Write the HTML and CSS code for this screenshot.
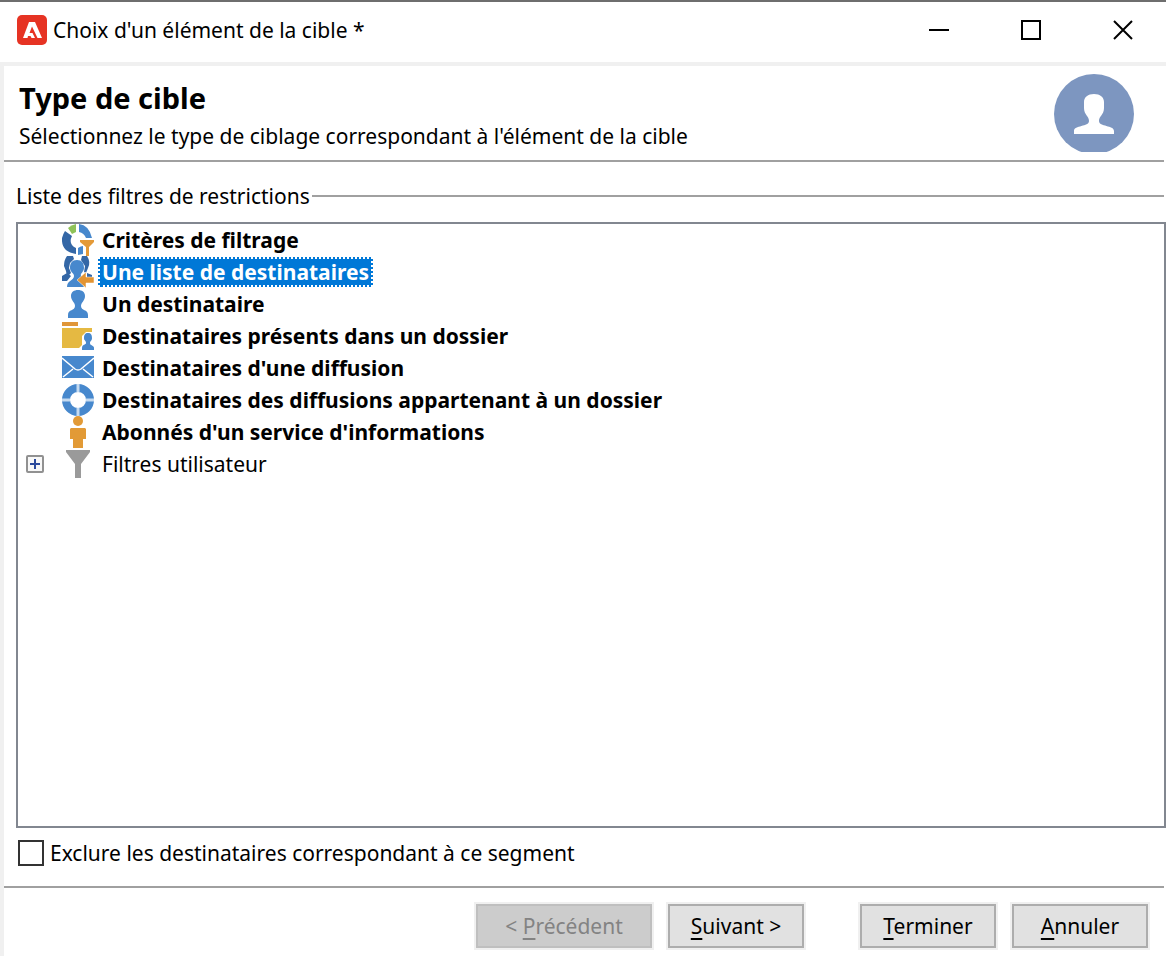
FILE: index.html
```html
<!DOCTYPE html>
<html lang="fr">

<head>
    <meta charset="UTF-8">
    <meta name="viewport" content="width=device-width, initial-scale=1.0">
    <title>Choix d'un élément de la cible</title>
    <link rel="stylesheet" href="styles.css">
</head>

<body>
    <div class="window">
        <div class="titlebar">
            <svg class="logo" viewBox="0 0 30 30">
                <rect width="30" height="30" rx="5" fill="#e63323" />
                <path d="M12 7h6l7 16h-4.500l-5.500-11.500L12.500 18h3l2.500 5h-3.500l-1-2H11l-.5 2H6z" fill="#fff" />
            </svg>
            <span class="caption">Choix d'un élément de la cible *</span>
            <div class="controls">
                <button type="button" aria-label="Réduire">
                    <svg viewBox="0 0 20 20"><path d="M0 10h20" /></svg>
                </button>
                <button type="button" aria-label="Agrandir">
                    <svg viewBox="0 0 20 20"><path d="M1 1h18v18H1z" /></svg>
                </button>
                <button type="button" aria-label="Fermer">
                    <svg viewBox="0 0 20 20"><path d="M1 1l18 18M19 1L1 19" /></svg>
                </button>
            </div>
        </div>

        <div class="page">
            <header class="header">
                <div class="heading">
                    <h1>Type de cible</h1>
                    <p>Sélectionnez le type de ciblage correspondant à l'élément de la cible</p>
                </div>
                <svg class="avatar" viewBox="0 0 80 78">
                    <circle cx="40" cy="40" r="40" fill="#7d96c0" />
                    <path d="M40 20c6 0 10 3 10 8v6c0 7-5 8-5 13 0 6 15 4 15 10v3H20v-3c0-6 15-4 15-10 0-5-5-6-5-13v-6c0-5 4-8 10-8z" fill="#fff" />
                </svg>
            </header>

            <main class="content">
                <h2 class="group">Liste des filtres de restrictions</h2>
                <ul class="tree">
                    <li class="node">
                        <svg class="icon" viewBox="0 0 32 32">
                            <path d="M3 7l7 5q-4 8 4 12v6Q-1 28 0 14q1-4 3-7z" fill="#3467a6" />
                            <path d="M6 4q3-3 8-4v8l-4 2z" fill="#8fc258" />
                            <path d="M17 0q10 1 13 14h-6q-2-5-7-6zM16 24q3-2 5-2v8l-5 1z" fill="#4788cd" />
                            <path d="M18 16h14v2l-5 5v9h-3v-9l-6-5z" fill="#e49a38" />
                        </svg>
                        <span class="name">Critères de filtrage</span>
                    </li>
                    <li class="node">
                        <svg class="icon" viewBox="0 0 32 32">
                            <path d="M5 0h6l1 3-4 4-1 5 2 5-4 4-1-6-2-5q0-6 3-10zM20 0h5q4 6 1 12l-2 5-2-1 1-6-4-6zM0 20l5-3 4 3-4 5H0zM25 17l5 2v3h-5z" fill="#3467a6" />
                            <path d="M15 4c5 0 7 3 7 8 0 4-4 5-3 8l5 2-4 5 2 4H5c0-7 7-6 7-11 0-3-4-4-4-8 0-5 2-8 7-8z" fill="#4788cd" />
                            <path d="M15 24l9-8v5h8v6h-8v5z" fill="#e29433" stroke="#fff" stroke-width=".5" />
                        </svg>
                        <span class="name selected">Une liste de destinataires</span>
                    </li>
                    <li class="node">
                        <svg class="icon" viewBox="0 0 32 32">
                            <path d="M16 2c4 0 7 2 7 6 0 5-4 6-4 10 0 5 7 3 7 9v3H6v-3c0-6 7-4 7-9 0-4-4-5-4-10 0-4 3-6 7-6z" fill="#4788cd" />
                        </svg>
                        <span class="name">Un destinataire</span>
                    </li>
                    <li class="node">
                        <svg class="icon" viewBox="0 0 32 32">
                            <path d="M0 2h16v4H0z" fill="#e09638" />
                            <path d="M0 8h30v4h-6l-4 4v9l-3 3H0z" fill="#e5b942" />
                            <path d="M26 13c3 0 4 2 4 5 0 3-2 3-2 5 0 3 4 2 4 5v2H20v-2c0-4 4-3 4-5 0-3-2-2-2-5s1-5 4-5z" fill="#4788cd" />
                        </svg>
                        <span class="name">Destinataires présents dans un dossier</span>
                    </li>
                    <li class="node">
                        <svg class="icon" viewBox="0 0 32 32">
                            <path d="M0 4h32v22H0z" fill="#4788cd" />
                            <path d="M0 6l13 11q3 2 6 0L32 6M1 25l10-8M31 25l-10-8" fill="none" stroke="#fff" stroke-width="1.500" />
                        </svg>
                        <span class="name">Destinataires d'une diffusion</span>
                    </li>
                    <li class="node">
                        <svg class="icon" viewBox="0 0 32 32">
                            <circle cx="16" cy="16" r="12" fill="none" stroke="#4788cd" stroke-width="8" />
                            <path d="M16 0v8M16 24v8M0 16h8M24 16h8" stroke="#c5daf0" stroke-width="3" />
                        </svg>
                        <span class="name">Destinataires des diffusions appartenant à un dossier</span>
                    </li>
                    <li class="node">
                        <svg class="icon" viewBox="0 0 32 32">
                            <circle cx="16" cy="5" r="5" fill="#e29a36" />
                            <path d="M9 12h14l1 1v10h-3v9H11v-9H8V13z" fill="#e29a36" />
                        </svg>
                        <span class="name">Abonnés d'un service d'informations</span>
                    </li>
                    <li class="node folder">
                        <button type="button" class="expand" aria-label="Développer">
                            <svg viewBox="0 0 10 10"><path d="M0 5h10M5 0v10" /></svg>
                        </button>
                        <svg class="icon" viewBox="0 0 32 32">
                            <path d="M4 2h24v2l-9 12v14h-6V16L4 4z" fill="#9a9a9a" />
                        </svg>
                        <span class="name">Filtres utilisateur</span>
                    </li>
                </ul>
                <label class="exclude">
                    <input type="checkbox">
                    Exclure les destinataires correspondant à ce segment
                </label>
            </main>

            <footer class="footer">
                <button type="button" class="btn wide" disabled>&lt; <u>P</u>récédent</button>
                <button type="button" class="btn"><u>S</u>uivant &gt;</button>
                <button type="button" class="btn finish"><u>T</u>erminer</button>
                <button type="button" class="btn"><u>A</u>nnuler</button>
            </footer>
        </div>
    </div>
</body>

</html>
```

FILE: styles.css
```css
html,
body {
    margin: 0;
    padding: 0;
}

* {
    box-sizing: border-box;
}

:root {
    --line: #a0a0a0;
    --frame: #f0f0f0;
    --select: #0078d7;
}

body {
    font-family: "Noto Sans", "Open Sans", sans-serif;
    font-size: 21px;
    line-height: 32px;
    color: #000;
    background: #fff;
}

button {
    font: inherit;
    color: inherit;
}

.window {
    display: flex;
    flex-direction: column;
    min-height: 100vh;
    border-top: 2px solid #6e6e6e;
}

.titlebar {
    display: flex;
    align-items: center;
    height: 60px;
    padding: 0 23px 4px 17px;
}

.logo {
    width: 30px;
    height: 30px;
    margin-right: 6px;
}

.controls {
    display: flex;
    gap: 52px;
    margin-left: auto;
}

.controls button {
    width: 40px;
    height: 40px;
    padding: 10px;
    border: none;
    background: none;
}

.controls svg {
    display: block;
    width: 20px;
    height: 20px;
    fill: none;
    stroke: #000;
    stroke-width: 2;
}

.page {
    flex: 1;
    display: flex;
    flex-direction: column;
    border-top: 4px solid var(--frame);
    border-left: 4px solid var(--frame);
}

.header {
    display: flex;
    justify-content: space-between;
    padding: 8px 30px 8px 15px;
    margin-right: 2px;
    border-bottom: 2px solid var(--line);
}

.header h1 {
    margin: 8px 0;
    font-size: 29px;
    line-height: 32px;
}

.header p {
    margin: 0;
    line-height: 28px;
}

.avatar {
    flex: none;
    width: 80px;
    height: 78px;
}

.content {
    flex: 1;
    display: flex;
    flex-direction: column;
    padding: 18px 0 17px 12px;
}

.group {
    display: flex;
    align-items: center;
    gap: 2px;
    margin: 0 2px 10px 0;
    font-size: inherit;
    font-weight: normal;
}

.group::after {
    content: "";
    flex: 1;
    height: 2px;
    background: var(--line);
}

.tree {
    flex: 1;
    margin: 0 0 9px;
    padding: 0 8px;
    list-style: none;
    border: 2px solid #828790;
}

.node {
    display: flex;
    align-items: center;
    height: 32px;
    padding-left: 36px;
    font-weight: bold;
}

.folder {
    padding-left: 0;
    font-weight: normal;
}

.icon {
    flex: none;
    width: 32px;
    height: 32px;
}

.name {
    margin-left: 4px;
    padding: 0 4px;
    line-height: 30px;
}

.selected {
    color: #fff;
    background: var(--select);
    outline: 2px dotted #fff;
    outline-offset: -2px;
}

.expand {
    display: grid;
    place-items: center;
    width: 18px;
    height: 18px;
    margin-right: 18px;
    padding: 0;
    border: 2px solid #919191;
    border-radius: 2px;
    background: #f8f8f8;
}

.expand svg {
    width: 10px;
    height: 10px;
    stroke: #2c4a9c;
    stroke-width: 2;
}

.exclude {
    display: flex;
    align-items: center;
    gap: 6px;
    padding-left: 2px;
}

.exclude input {
    appearance: none;
    width: 26px;
    height: 26px;
    margin: 0;
    border: 2px solid #333;
    background: #fff;
}

.footer {
    display: flex;
    justify-content: flex-end;
    gap: 16px;
    padding: 16px 16px 8px;
    margin-right: 2px;
    border-top: 2px solid var(--line);
}

.btn {
    width: 136px;
    height: 44px;
    padding: 0;
    border: 2px solid #adadad;
    background: #e1e1e1;
    box-shadow: 0 0 0 2px var(--frame);
}

.btn u {
    text-underline-offset: 4px;
}

.wide {
    width: 176px;
}

.finish {
    margin-left: 40px;
}

.btn:disabled {
    color: #838383;
    border-color: #bfbfbf;
    background: #ccc;
}
```
